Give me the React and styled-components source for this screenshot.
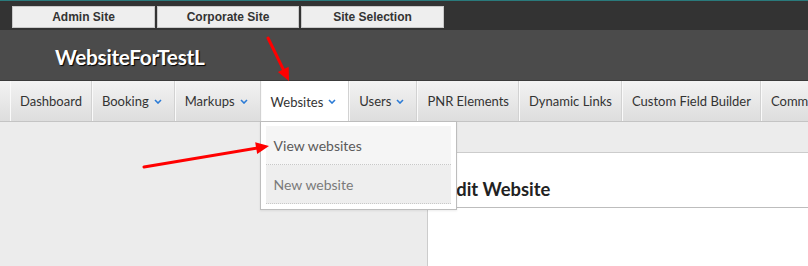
import styled, { createGlobalStyle } from 'styled-components'

const GlobalStyle = createGlobalStyle`
  html, body {
    margin: 0;
    padding: 0;
    background: #ffffff;
  }
  #root {
    width: 808px;
    height: 266px;
    overflow: hidden;
  }
`

const Page = styled.div`
  position: relative;
  width: 808px;
  height: 266px;
  overflow: hidden;
  display: flex;
  flex-direction: column;
  font-family: Lato, "Open Sans", sans-serif;
`

const TopBar = styled.div`
  height: 30px;
  background-color: #333333;
  border-top: 1px solid #2a7a7c;
  display: flex;
  align-items: flex-start;
  gap: 2px;
  padding: 5px 0 0 12px;
  box-sizing: border-box;
`

const SiteButton = styled.button`
  width: ${({ w }) => w}px;
  height: 22px;
  background-color: #eeeeee;
  border: 1px solid #c9c9c9;
  font-family: "Liberation Sans", Arial, sans-serif;
  font-weight: bold;
  font-size: 12px;
  color: #333333;
  padding: 0;
  cursor: pointer;
`

const Header = styled.div`
  height: 50px;
  background-color: #4b4b4b;
  display: flex;
  align-items: center;
  padding-left: 55px;
`

const Brand = styled.h1`
  margin: 2px 0 0;
  font-family: Lato, sans-serif;
  font-weight: bold;
  font-size: 20.8px;
  letter-spacing: -0.3px;
  color: #ffffff;
  text-shadow: 1px 1px 1px #000000;
`

const Nav = styled.div`
  height: 40px;
  display: flex;
  padding-left: 10px;
  background: linear-gradient(#f3f3f3, #dddddd);
  border-top: 1px solid #3a3a3a;
  border-bottom: 1px solid #c4c4c4;
  white-space: nowrap;
  position: relative;
  z-index: 2;
`

const NavItem = styled.div`
  position: relative;
  display: flex;
  align-items: center;
  gap: 5px;
  padding: 0 ${({ caret }) => (caret ? 12 : 9)}px 0 9px;
  font-size: 13px;
  color: #333333;
  border-left: 1px solid #fafafa;
  border-right: 1px solid #d2d2d2;
  background: ${({ active }) => (active ? '#ffffff' : 'transparent')};
  ${({ active }) => active && 'height: 41px;'}
`

const Dropdown = styled.div`
  position: absolute;
  top: 40px;
  left: -2px;
  width: 185px;
  padding: 4px 5px 5px;
  background: #ffffff;
  border: 1px solid #bdbdbd;
  box-shadow: 0 1px 2px rgba(0, 0, 0, 0.08);
`

const DropItem = styled.div`
  height: 38px;
  display: flex;
  align-items: center;
  padding-left: 8px;
  font-size: 14px;
  color: ${({ dim }) => (dim ? '#7a7a7a' : '#5a5a5a')};
  background: ${({ dim }) => (dim ? '#eeeeee' : '#f5f5f5')};
  border-bottom: 1px dotted #c8c8c8;
`

const Body = styled.div`
  flex: 1;
  display: flex;
  border-top: 1px solid #ececec;
`

const Sidebar = styled.div`
  width: 427px;
  background-color: #ececec;
  border-right: 1px solid #cccccc;
`

const Main = styled.div`
  flex: 1;
  display: flex;
  flex-direction: column;
  background-color: #ffffff;
`

const Crumbs = styled.div`
  height: 29px;
  background-color: #ececec;
  border-bottom: 1px solid #cccccc;
`

const TitleBox = styled.div`
  height: 55px;
  display: flex;
  align-items: flex-end;
  padding: 0 0 7px 18px;
  box-sizing: border-box;
  border-bottom: 1px solid #bdbdbd;
`

const Title = styled.h2`
  margin: 0;
  font-size: 18.4px;
  font-weight: bold;
  color: #222222;
`

const Overlay = styled.svg`
  position: absolute;
  left: 0;
  top: 0;
  pointer-events: none;
  z-index: 5;
`

const Caret = () => (
  <svg width="8" height="5" viewBox="0 0 8 5">
    <polyline points="1,1 4,4 7,1" fill="none" stroke="#2b7bd6" strokeWidth="1.6" />
  </svg>
)

const navItems = [
  { label: 'Dashboard' },
  { label: 'Booking', caret: true },
  { label: 'Markups', caret: true },
  { label: 'Websites', caret: true, active: true },
  { label: 'Users', caret: true },
  { label: 'PNR Elements' },
  { label: 'Dynamic Links' },
  { label: 'Custom Field Builder' },
  { label: 'Commands' },
]

const Arrow = ({ x1, y1, x2, y2 }) => {
  const a = Math.atan2(y2 - y1, x2 - x1)
  const len = 13
  const wid = 6
  const bx = x2 - len * Math.cos(a)
  const by = y2 - len * Math.sin(a)
  const px = -Math.sin(a) * wid
  const py = Math.cos(a) * wid
  return (
    <g>
      <line x1={x1} y1={y1} x2={bx} y2={by} stroke="#ff0000" strokeWidth="3" strokeLinecap="round" />
      <polygon points={`${x2},${y2} ${bx + px},${by + py} ${bx - px},${by - py}`} fill="#ff0000" />
    </g>
  )
}

const App = () => {
  return (
    <Page>
      <GlobalStyle />
      <TopBar>
        <SiteButton w={143}>Admin Site</SiteButton>
        <SiteButton w={142}>Corporate Site</SiteButton>
        <SiteButton w={143}>Site Selection</SiteButton>
      </TopBar>

      <Header>
        <Brand>WebsiteForTestL</Brand>
      </Header>

      <Nav>
        {navItems.map((item) => (
          <NavItem key={item.label} caret={item.caret} active={item.active}>
            {item.label}
            {item.caret && <Caret />}
            {item.active && (
              <Dropdown>
                <DropItem>View websites</DropItem>
                <DropItem dim>New website</DropItem>
              </Dropdown>
            )}
          </NavItem>
        ))}
      </Nav>

      <Body>
        <Sidebar />
        <Main>
          <Crumbs />
          <TitleBox>
            <Title>Edit Website</Title>
          </TitleBox>
        </Main>
      </Body>

      <Overlay width="808" height="266">
        <Arrow x1={268} y1={38} x2={289} y2={81} />
        <Arrow x1={144} y1={167} x2={269} y2={146} />
      </Overlay>
    </Page>
  )
}

export default App
